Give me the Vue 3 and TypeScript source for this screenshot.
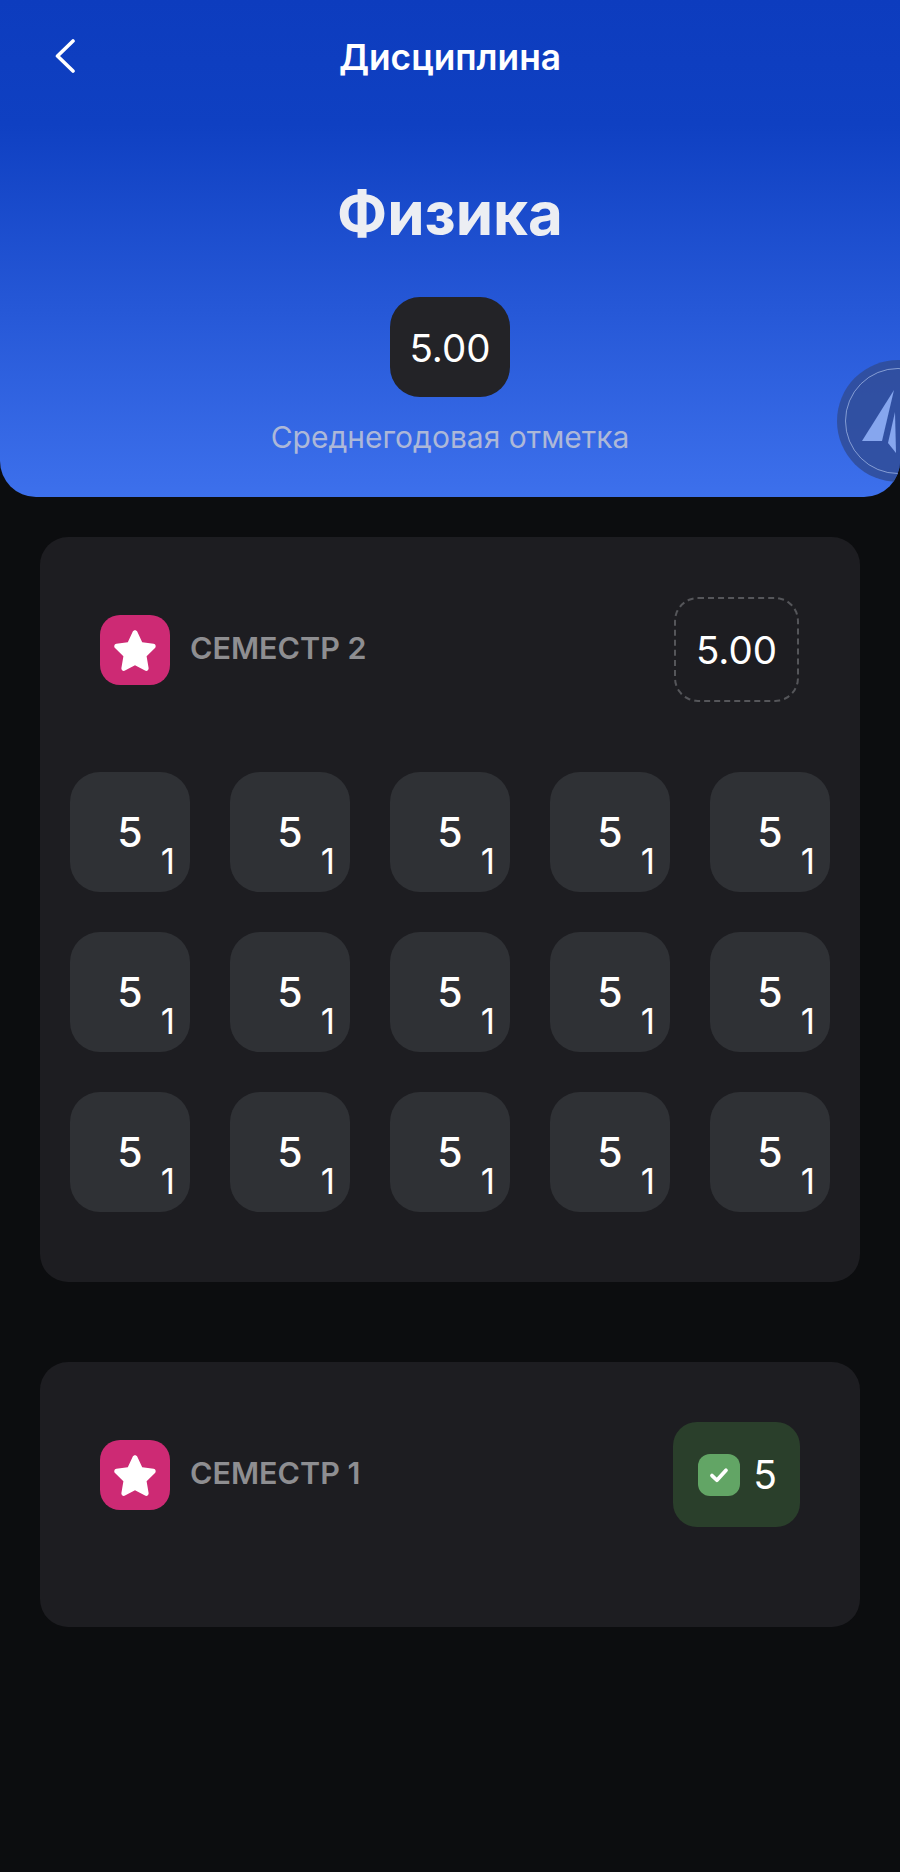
<script setup lang="ts">
const marks: number[] = Array.from({ length: 15 }, () => 5)
const starPath =
  'M12 2.6c.5 0 .9.3 1.1.7l2.5 5.3 5.7.8c1 .1 1.4 1.4.7 2.1l-4.2 4.1 1 5.9c.2 1-.9 1.8-1.8 1.3L12 20.1l-5 2.7c-.9.5-2-.3-1.8-1.3l1-5.9L2 11.5c-.7-.7-.3-2 .7-2.1l5.7-.8 2.5-5.3c.2-.4.6-.7 1.1-.7z'
</script>

<template>
  <div class="page">
    <header class="hero">
      <div class="nav">
        <svg class="back" viewBox="0 0 20 34" fill="none" stroke="#fff" stroke-width="3.6" stroke-linecap="round" stroke-linejoin="round">
          <path d="M18 2 2.5 17 18 32" />
        </svg>
        <span class="nav-title">Дисциплина</span>
      </div>
      <h1 class="subject">Физика</h1>
      <div class="year-mark">5.00</div>
      <p class="year-label">Среднегодовая отметка</p>

      <div class="assistant">
        <div class="assistant-ring"></div>
        <svg class="assistant-plane" viewBox="0 0 40 70">
          <path d="M34 1 2 52h20z" />
          <path d="M35 23 28 54l8 10z" />
        </svg>
      </div>
    </header>

    <main class="content">
      <section class="card card-open">
        <div class="card-head">
          <div class="semester">
            <div class="star-box">
              <svg viewBox="0 0 24 24"><path :d="starPath" /></svg>
            </div>
            <span class="semester-name">СЕМЕСТР 2</span>
          </div>
          <div class="average">5.00</div>
        </div>
        <div class="grid">
          <div v-for="(mark, i) in marks" :key="i" class="tile">
            <span class="tile-mark">{{ mark }}</span>
            <span class="tile-weight">1</span>
          </div>
        </div>
      </section>

      <section class="card card-closed">
        <div class="card-head">
          <div class="semester">
            <div class="star-box">
              <svg viewBox="0 0 24 24"><path :d="starPath" /></svg>
            </div>
            <span class="semester-name">СЕМЕСТР 1</span>
          </div>
          <div class="final">
            <span class="check">
              <svg viewBox="0 0 24 24" fill="none" stroke="#fff" stroke-width="3.2" stroke-linecap="round" stroke-linejoin="round">
                <path d="M6 12.5l4.2 4L18 8" />
              </svg>
            </span>
            <span class="final-mark">5</span>
          </div>
        </div>
      </section>
    </main>
  </div>
</template>

<style>
html,
body {
  margin: 0;
  background: #0c0d0f;
}
</style>

<style scoped>
.page {
  width: 900px;
  height: 1872px;
  background: #0c0d0f;
  color: #fff;
  font-family: Inter, "Liberation Sans", sans-serif;
  overflow: hidden;
}

.hero {
  position: relative;
  height: 497px;
  box-sizing: border-box;
  padding-top: 35px;
  display: flex;
  flex-direction: column;
  align-items: center;
  background: linear-gradient(180deg, #0d3cbe 0%, #0f40c2 25%, #3d70ec 100%);
  border-radius: 0 0 36px 36px;
  overflow: hidden;
}

.nav {
  position: relative;
  width: 100%;
  height: 46px;
  display: flex;
  align-items: center;
  justify-content: center;
}

.back {
  position: absolute;
  left: 55px;
  top: 4px;
  width: 20px;
  height: 34px;
}

.nav-title {
  font-size: 35.3px;
  font-weight: 600;
  line-height: 46px;
  white-space: nowrap;
}

.subject {
  margin: 97px 0 0;
  font-size: 60px;
  font-weight: 700;
  line-height: 70px;
  color: #eceef3;
}

.year-mark {
  margin-top: 49px;
  width: 120px;
  height: 100px;
  padding-top: 2px;
  box-sizing: border-box;
  display: flex;
  align-items: center;
  justify-content: center;
  border-radius: 30px;
  background: #232327;
  font-size: 38.5px;
  line-height: 44px;
}

.year-label {
  margin: 22px 0 0;
  font-size: 30px;
  line-height: 36px;
  color: #adb8d8;
  white-space: nowrap;
}

.assistant {
  position: absolute;
  left: 837px;
  top: 360px;
  width: 122px;
  height: 122px;
  border-radius: 50%;
  background: rgba(48, 76, 150, 0.85);
}

.assistant-ring {
  position: absolute;
  inset: 8px;
  border-radius: 50%;
  border: 1.5px solid rgba(190, 208, 245, 0.6);
  box-sizing: border-box;
}

.assistant-plane {
  position: absolute;
  left: 23px;
  top: 29px;
  width: 40px;
  height: 70px;
  fill: #86a6ee;
}

.content {
  padding: 40px 40px 0;
  display: flex;
  flex-direction: column;
  gap: 80px;
}

.card {
  box-sizing: border-box;
  background: #1d1d21;
  border-radius: 28px;
}

.card-open {
  height: 745px;
  padding: 60px 30px 70px;
}

.card-closed {
  height: 265px;
  padding: 60px 30px 0;
}

.card-head {
  display: flex;
  align-items: center;
  justify-content: space-between;
  height: 105px;
  padding: 0 30px;
}

.semester {
  display: flex;
  align-items: center;
  gap: 20px;
}

.star-box {
  width: 70px;
  height: 70px;
  border-radius: 20px;
  background: #cd2a74;
  display: flex;
  align-items: center;
  justify-content: center;
}

.star-box svg {
  width: 48px;
  height: 48px;
  margin-top: -2px;
  fill: #fff;
}

.semester-name {
  font-size: 30.5px;
  font-weight: 600;
  color: #8e8e91;
  white-space: nowrap;
  margin-top: -4px;
}

.average {
  width: 125px;
  height: 105px;
  margin-right: 1px;
  box-sizing: border-box;
  display: flex;
  align-items: center;
  justify-content: center;
  border: 2px dashed #55565a;
  border-radius: 24px;
  font-size: 38.5px;
}

.grid {
  margin-top: 70px;
  display: grid;
  grid-template-columns: repeat(5, 120px);
  grid-auto-rows: 120px;
  gap: 40px;
}

.tile {
  position: relative;
  background: #2f3135;
  border-radius: 30px;
  display: flex;
  align-items: center;
  justify-content: center;
}

.tile-mark {
  font-size: 41px;
  line-height: 50px;
  font-weight: 500;
}

.tile-weight {
  position: absolute;
  right: 15px;
  bottom: 11px;
  font-size: 35px;
  line-height: 40px;
}

.final {
  width: 127px;
  height: 105px;
  padding-left: 2px;
  box-sizing: border-box;
  border-radius: 24px;
  background: #2a3f2b;
  display: flex;
  align-items: center;
  justify-content: center;
  gap: 13px;
}

.check {
  width: 42px;
  height: 42px;
  border-radius: 12px;
  background: #62a565;
  display: flex;
  align-items: center;
  justify-content: center;
}

.check svg {
  width: 28px;
  height: 28px;
}

.final-mark {
  font-size: 39px;
  line-height: 44px;
}
</style>
